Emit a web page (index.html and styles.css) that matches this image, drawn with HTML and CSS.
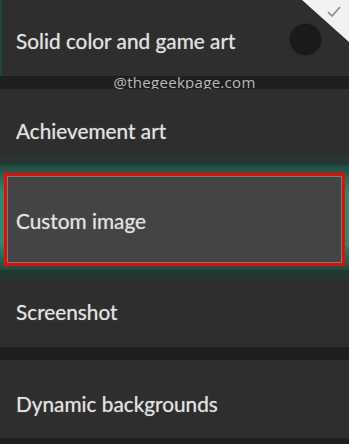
FILE: index.html
```html
<!DOCTYPE html>
<html>
<head>
    <title>Background options</title>
    <link rel="stylesheet" href="styles.css">
</head>
<body>
    <div class="menu">
        <div class="item first">
            <span class="label">Solid color and game art</span>
            <span class="swatch"></span>
            <span class="corner">
                <svg width="47" height="42" viewBox="0 0 47 42">
                    <polygon points="0,0 47,0 47,42" fill="#f2f2f2"/>
                    <polyline points="26,12 30,16 38,7" fill="none" stroke="#8a8a8a" stroke-width="1.6"/>
                </svg>
            </span>
        </div>
        <div class="watermark">@thegeekpage.com</div>
        <div class="item second">
            <span class="label">Achievement art</span>
        </div>
        <div class="selected-wrap">
            <div class="item selected">
                <span class="label">Custom image</span>
            </div>
        </div>
        <div class="item fourth">
            <span class="label">Screenshot</span>
        </div>
        <div class="item fifth">
            <span class="label">Dynamic backgrounds</span>
        </div>
    </div>
</body>
</html>
```

FILE: styles.css
```css
body {
    margin: 0;
    background-color: #1f1f1f;
    font-family: Lato, 'Open Sans', sans-serif;
    width: 349px;
    height: 444px;
    overflow: hidden;
}
.menu {
    display: flex;
    flex-direction: column;
}
.item {
    position: relative;
    display: flex;
    align-items: center;
    padding-left: 16px;
    background-color: #2e2e2e;
    color: #e2e2e2;
    font-size: 20.8px;
    box-sizing: border-box;
}
.label {
    text-shadow: 0 0 1px rgba(230, 230, 230, 0.6);
}
.first {
    height: 76px;
    padding-top: 4px;
    box-shadow: inset 3px 0 2px -1px #1d4a40;
}
.swatch {
    position: absolute;
    left: 290px;
    top: 24px;
    width: 31px;
    height: 31px;
    border-radius: 50%;
    background-color: #1a1a1a;
    box-shadow: 0 0 2px #1a1a1a;
}
.corner {
    position: absolute;
    right: 0;
    top: 0;
    line-height: 0;
}
.watermark {
    height: 13px;
    line-height: 13px;
    padding-left: 20px;
    text-align: center;
    color: #b9b9b9;
    font-family: 'Open Sans', sans-serif;
    font-size: 15px;
    letter-spacing: 0.3px;
}
.second {
    height: 76px;
    padding-top: 6px;
    background: linear-gradient(#2e2e2e 82%, #243a34);
}
.selected-wrap {
    padding: 8px 0 4px;
    background: linear-gradient(#1e4a3f, #2a8a72 25%, #2a8a72 75%, #1e4a3f);
}
.selected {
    height: 93px;
    margin: 0 4px;
    padding-left: 9px;
    padding-top: 2px;
    background-color: #444444;
    border: 3px solid #ff0000;
    box-shadow: inset 0 0 0 1px #3a9a82;
}
.fourth {
    height: 77px;
    padding-top: 6px;
    background: linear-gradient(#1e3a33, #2e2e2e 15%);
}
.fifth {
    height: 78px;
    margin-top: 13px;
    padding-top: 8px;
}
```
